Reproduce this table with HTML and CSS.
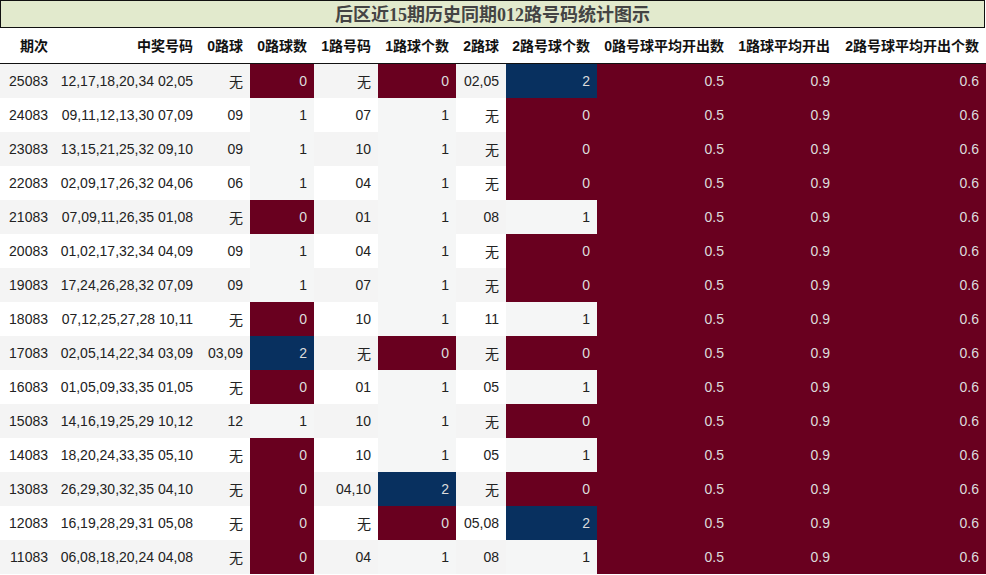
FILE: index.html
```html
<!DOCTYPE html>
<html lang="zh">
<head>
<meta charset="utf-8">
<title>后区近15期历史同期012路号码统计图示</title>
<link rel="stylesheet" href="styles.css">
</head>
<body>
<div class="title">后区近15期历史同期012路号码统计图示</div>
<table class="grid">
<colgroup>
<col class="w0"><col class="w1"><col class="w2"><col class="w3"><col class="w4"><col class="w5"><col class="w6"><col class="w7"><col class="w8"><col class="w9"><col class="w10">
</colgroup>
<thead>
<tr><th>期次</th><th>中奖号码</th><th>0路球</th><th>0路球数</th><th>1路号码</th><th>1路球个数</th><th>2路球</th><th>2路号球个数</th><th>0路号球平均开出数</th><th>1路球平均开出</th><th>2路号球平均开出个数</th></tr>
</thead>
<tbody>
<tr><td>25083</td><td>12,17,18,20,34 02,05</td><td>无</td><td class="h0">0</td><td>无</td><td class="h0">0</td><td>02,05</td><td class="h2">2</td><td class="h0">0.5</td><td class="h0">0.9</td><td class="h0">0.6</td></tr>
<tr><td>24083</td><td>09,11,12,13,30 07,09</td><td>09</td><td class="h1">1</td><td>07</td><td class="h1">1</td><td>无</td><td class="h0">0</td><td class="h0">0.5</td><td class="h0">0.9</td><td class="h0">0.6</td></tr>
<tr><td>23083</td><td>13,15,21,25,32 09,10</td><td>09</td><td class="h1">1</td><td>10</td><td class="h1">1</td><td>无</td><td class="h0">0</td><td class="h0">0.5</td><td class="h0">0.9</td><td class="h0">0.6</td></tr>
<tr><td>22083</td><td>02,09,17,26,32 04,06</td><td>06</td><td class="h1">1</td><td>04</td><td class="h1">1</td><td>无</td><td class="h0">0</td><td class="h0">0.5</td><td class="h0">0.9</td><td class="h0">0.6</td></tr>
<tr><td>21083</td><td>07,09,11,26,35 01,08</td><td>无</td><td class="h0">0</td><td>01</td><td class="h1">1</td><td>08</td><td class="h1">1</td><td class="h0">0.5</td><td class="h0">0.9</td><td class="h0">0.6</td></tr>
<tr><td>20083</td><td>01,02,17,32,34 04,09</td><td>09</td><td class="h1">1</td><td>04</td><td class="h1">1</td><td>无</td><td class="h0">0</td><td class="h0">0.5</td><td class="h0">0.9</td><td class="h0">0.6</td></tr>
<tr><td>19083</td><td>17,24,26,28,32 07,09</td><td>09</td><td class="h1">1</td><td>07</td><td class="h1">1</td><td>无</td><td class="h0">0</td><td class="h0">0.5</td><td class="h0">0.9</td><td class="h0">0.6</td></tr>
<tr><td>18083</td><td>07,12,25,27,28 10,11</td><td>无</td><td class="h0">0</td><td>10</td><td class="h1">1</td><td>11</td><td class="h1">1</td><td class="h0">0.5</td><td class="h0">0.9</td><td class="h0">0.6</td></tr>
<tr><td>17083</td><td>02,05,14,22,34 03,09</td><td>03,09</td><td class="h2">2</td><td>无</td><td class="h0">0</td><td>无</td><td class="h0">0</td><td class="h0">0.5</td><td class="h0">0.9</td><td class="h0">0.6</td></tr>
<tr><td>16083</td><td>01,05,09,33,35 01,05</td><td>无</td><td class="h0">0</td><td>01</td><td class="h1">1</td><td>05</td><td class="h1">1</td><td class="h0">0.5</td><td class="h0">0.9</td><td class="h0">0.6</td></tr>
<tr><td>15083</td><td>14,16,19,25,29 10,12</td><td>12</td><td class="h1">1</td><td>10</td><td class="h1">1</td><td>无</td><td class="h0">0</td><td class="h0">0.5</td><td class="h0">0.9</td><td class="h0">0.6</td></tr>
<tr><td>14083</td><td>18,20,24,33,35 05,10</td><td>无</td><td class="h0">0</td><td>10</td><td class="h1">1</td><td>05</td><td class="h1">1</td><td class="h0">0.5</td><td class="h0">0.9</td><td class="h0">0.6</td></tr>
<tr><td>13083</td><td>26,29,30,32,35 04,10</td><td>无</td><td class="h0">0</td><td>04,10</td><td class="h2">2</td><td>无</td><td class="h0">0</td><td class="h0">0.5</td><td class="h0">0.9</td><td class="h0">0.6</td></tr>
<tr><td>12083</td><td>16,19,28,29,31 05,08</td><td>无</td><td class="h0">0</td><td>无</td><td class="h0">0</td><td>05,08</td><td class="h2">2</td><td class="h0">0.5</td><td class="h0">0.9</td><td class="h0">0.6</td></tr>
<tr><td>11083</td><td>06,08,18,20,24 04,08</td><td>无</td><td class="h0">0</td><td>04</td><td class="h1">1</td><td>08</td><td class="h1">1</td><td class="h0">0.5</td><td class="h0">0.9</td><td class="h0">0.6</td></tr>
</tbody>
</table>
</body>
</html>
```

FILE: styles.css
```css
html, body {
  margin: 0;
  padding: 0;
  background: #ffffff;
}
body {
  width: 986px;
  font-family: "Liberation Sans", "Noto Sans CJK SC", sans-serif;
  font-size: 14px;
  color: #222222;
}
.title {
  box-sizing: border-box;
  width: 985px;
  height: 28px;
  border: 1px solid #111111;
  background: #e2eacd;
  text-align: center;
  font-family: "Liberation Serif", "Noto Sans CJK SC", serif;
  font-weight: bold;
  font-size: 18px;
  line-height: 28px;
  color: #444444;
}
.grid {
  width: 986px;
  table-layout: fixed;
  border-collapse: collapse;
  border-spacing: 0;
}
.w0 { width: 55px; }
.w1 { width: 145px; }
.w2 { width: 50px; }
.w3 { width: 64px; }
.w4 { width: 64px; }
.w5 { width: 78px; }
.w6 { width: 50px; }
.w7 { width: 91px; }
.w8 { width: 134px; }
.w9 { width: 106px; }
.w10 { width: 149px; }
.grid th,
.grid td {
  padding: 0 7px 0 0;
  text-align: right;
  white-space: nowrap;
  overflow: hidden;
}
.grid th {
  box-sizing: border-box;
  height: 35px;
  font-weight: bold;
  color: #111111;
  border-bottom: 1px solid #111111;
  background: #ffffff;
}
.grid td {
  height: 34px;
}
.grid tbody tr:nth-child(odd) td { background: #f4f4f4; }
.grid tbody tr:nth-child(even) td { background: #ffffff; }
.grid tbody tr td.h0 { background: #69001f; color: #dcdcdc; }
.grid tbody tr td.h1 { background: #f5f6f6; color: #222222; }
.grid tbody tr td.h2 { background: #08305f; color: #dcdcdc; }
```
